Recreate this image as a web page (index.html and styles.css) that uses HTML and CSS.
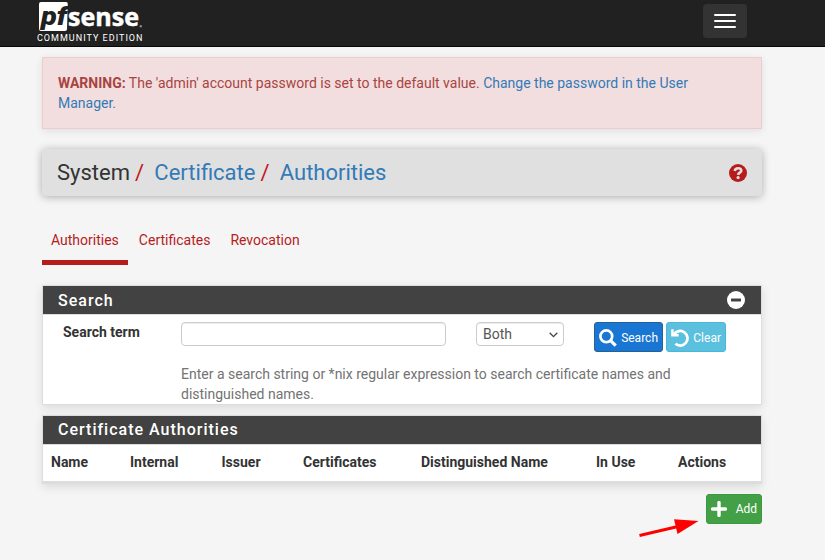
FILE: index.html
```html
<!DOCTYPE html>
<html lang="en">
<head>
<meta charset="utf-8">
<title>System: Certificate: Authorities</title>
<link rel="stylesheet" href="styles.css">
</head>
<body>
<header class="navbar">
  <a class="brand">
    <svg class="logo" width="108" height="45" viewBox="0 0 108 45">
      <path fill="#fff" d="M4 2H29Q31 2 30.800 4L30 29Q30 31 28 31H4Q2 31 2 29V4Q2 2 4 2Z"/>
      <text class="logo-pf" x="4" y="24.500" textLength="26" lengthAdjust="spacingAndGlyphs">pf</text>
      <text class="logo-sense" x="31" y="25.500" textLength="71" lengthAdjust="spacingAndGlyphs">sense</text>
      <circle cx="103.800" cy="26.300" r="1.200" fill="#888"/>
      <text class="logo-edition" x="0" y="41" textLength="105.500">COMMUNITY EDITION</text>
    </svg>
  </a>
  <button class="toggle" aria-label="Menu"><i></i><i></i><i></i></button>
</header>
<main class="container">
  <div class="alert"><strong>WARNING:</strong> The 'admin' account password is set to the default value. <a>Change the password in the User Manager.</a></div>
  <div class="titlebar">
    <h1 class="crumbs"><span>System</span><b>/</b><a>Certificate</a><b>/</b><a>Authorities</a></h1>
    <svg class="help" width="18" height="18" viewBox="0 0 18 18"><circle cx="9" cy="9" r="9" fill="#b71c1c"/><path d="M5.700 6.900C6.100 5 7.300 4.200 9.100 4.200C11.100 4.200 12.300 5.300 12.300 6.700C12.300 8.700 9.200 8.600 9.100 10.900" fill="none" stroke="#e0e0e0" stroke-width="2.600"/><circle cx="9.100" cy="13.600" r="1.600" fill="#e0e0e0"/></svg>
  </div>
  <nav class="tabs"><a class="tab active">Authorities</a><a class="tab">Certificates</a><a class="tab">Revocation</a></nav>
  <section class="panel">
    <h2 class="heading heading-search">Search
      <svg width="18" height="18" viewBox="0 0 18 18"><circle cx="9" cy="9" r="9" fill="#fff"/><rect x="4" y="7.500" width="10" height="3" rx=".5" fill="#424242"/></svg>
    </h2>
    <div class="search">
      <label class="label" for="term">Search term</label>
      <input class="field" id="term" type="text">
      <div class="select">Both<svg width="9" height="6" viewBox="0 0 9 6"><path d="M.7 .8L4.500 4.600L8.300 .8" fill="none" stroke="#444" stroke-width="1.300"/></svg></div>
      <div class="buttons">
        <button class="btn primary"><svg width="18" height="18" viewBox="0 0 18 18"><circle cx="7.300" cy="7.300" r="5.900" fill="none" stroke="#fff" stroke-width="2.700"/><path d="M11.600 11.600L16.700 16.700" stroke="#fff" stroke-width="3.200"/></svg><span>Search</span></button>
        <button class="btn info"><svg width="18" height="18" viewBox="0 0 18 18"><path d="M3 5.400A7.300 7.300 0 1 1 4.400 14.800" fill="none" stroke="#fff" stroke-width="2.700"/><path d="M.2 .3H2.700V5H7.600V7.500H.2Z" fill="#fff"/></svg><span>Clear</span></button>
      </div>
      <p class="hint">Enter a search string or *nix regular expression to search certificate names and distinguished names.</p>
    </div>
  </section>
  <section class="panel authorities">
    <h2 class="heading">Certificate Authorities</h2>
    <div class="columns"><b>Name</b><b>Internal</b><b>Issuer</b><b>Certificates</b><b>Distinguished Name</b><b>In Use</b><b>Actions</b></div>
  </section>
  <div class="actions">
    <svg class="pointer" width="62" height="22" viewBox="0 0 62 22"><path d="M1.500 17.500L40 8.500" stroke="#f00" stroke-width="3"/><path d="M36 1.200L60.500 3L39.500 16Z" fill="#f00"/></svg>
    <button class="btn success"><svg width="16" height="16" viewBox="0 0 16 16"><path d="M8 1.600V14.400M1.600 8H14.400" stroke="#fff" stroke-width="3.400" stroke-linecap="round"/></svg>Add</button>
  </div>
</main>
</body>
</html>
```
FILE: styles.css
```css
* { box-sizing: border-box; }
body { margin: 0; min-height: 560px; display: flow-root; background: #f5f5f5; color: #333; font: 14px/20px Roboto, sans-serif; }
a { color: #337ab7; }
button { font: inherit; border: 0; padding: 0; }
.navbar { height: 47px; background: #212121; border-bottom: 1px solid #080808; display: flex; justify-content: space-between; padding: 0 78px 0 37px; }
.logo { display: block; }
.logo-pf { font: italic 900 25px Roboto, sans-serif; fill: #212121; }
.logo-sense { font: 700 25px "Open Sans", sans-serif; fill: #fff; stroke: #fff; stroke-width: .5px; }
.logo-edition { font: 9px Roboto, sans-serif; fill: #fff; }
.toggle { width: 44px; height: 34px; margin-top: 4px; border-radius: 4px; background: #333; display: flex; flex-direction: column; align-items: center; justify-content: center; gap: 4px; }
.toggle i { width: 22px; height: 2px; border-radius: 1px; background: #fff; }
.container { margin: 10px 63px 0 42px; padding-bottom: 36px; }
.alert { height: 72px; padding: 15px; border: 1px solid #ebccd1; background: #f2dede; color: #a94442; box-shadow: 0 2px 8px rgba(0,0,0,.09); }
.titlebar { height: 47px; margin-top: 20px; padding: 0 15px; border-radius: 4px; background: #e0e0e0; box-shadow: 0 1px 9px rgba(0,0,0,.3); display: flex; align-items: center; justify-content: space-between; }
.crumbs { margin: 0; font-size: 22px; line-height: 26px; font-weight: 400; display: flex; }
.crumbs b { color: #c4161c; font-weight: 400; margin: 0 10.300px 0 5px; }
.help { margin-top: 1px; }
.tabs { display: flex; height: 35px; margin-top: 34px; }
.tab { color: #b71c1c; padding: 0 9px; margin-right: 2px; height: 35px; }
.tab.active { border-bottom: 5px solid #b71c1c; }
.panel { margin-top: 20px; background: #fff; border: 1px solid #ddd; box-shadow: 0 3px 9px rgba(0,0,0,.11); }
.heading { height: 29px; margin: 0; padding: 0 16px 0 15px; background: #424242; color: #fff; border-bottom: 1px solid #ddd; display: flex; align-items: center; justify-content: space-between; font-size: 16px; line-height: 28px; font-weight: 500; letter-spacing: 1px; }
.heading-search { line-height: 26px; padding-top: 1px; }
.heading-search svg { margin-top: -1px; }
.search { height: 89px; padding: 7px 35px 0 20px; display: grid; grid-template-columns: 88px 265px 88px 132px; column-gap: 30px; grid-template-rows: 42px 40px; align-items: start; }
.label { font-weight: 700; white-space: nowrap; }
.field, .select { height: 24px; border: 1px solid #ccc; border-radius: 4px; background: #fff; box-shadow: inset 0 1px 1px rgba(0,0,0,.075); }
.field { width: 265px; padding: 0 6px; font: inherit; }
.select { padding: 0 5px 0 6px; line-height: 22px; color: #555; display: flex; justify-content: space-between; align-items: center; }
.select svg { margin-top: 2px; }
.buttons { display: flex; gap: 3px; }
.btn { height: 30px; border: 1px solid; border-radius: 3px; color: #fff; font-size: 12px; line-height: 18px; padding: 0 4px; display: flex; align-items: center; justify-content: space-between; }
.btn svg { margin-top: 2px; }
.btn span { margin-top: 2px; }
.primary { width: 69px; background: #1976d2; border-color: #286090; }
.info { width: 60px; background: #5bc0de; border-color: #46b8da; }
.hint { margin: 0; grid-column: 2 / 5; color: #737373; }
.authorities { margin-top: 10px; border-bottom-width: 3px; }
.columns { height: 36px; padding: 7px 8px 0; display: grid; grid-template-columns: 79px 91.500px 81.500px 118px 175px 82px 1fr; white-space: nowrap; }
.actions { position: relative; display: flex; justify-content: flex-end; margin-top: 10px; }
.success { width: 56px; background: #43a047; border-color: #3a9b3e; }
.success svg { margin-top: 0; }
.pointer { position: absolute; right: 62px; top: 24px; }
```
